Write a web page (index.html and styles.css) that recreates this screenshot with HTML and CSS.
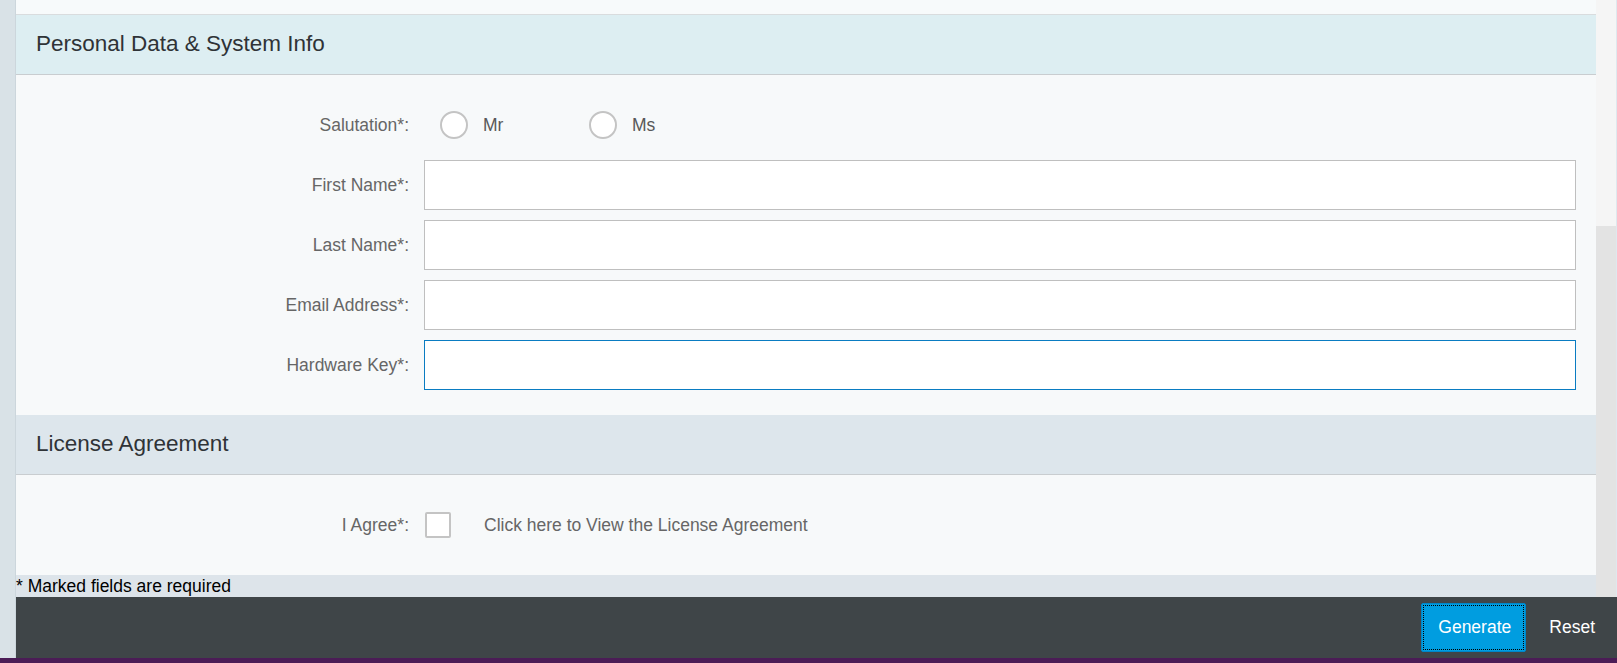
FILE: index.html
```html
<!DOCTYPE html>
<html lang="en">
<head>
<meta charset="utf-8">
<title>License Key Request</title>
<link rel="stylesheet" href="styles.css">
</head>
<body>
<div class="page">
  <div class="upper">
    <div class="strip"></div>
    <div class="column">
      <div class="mainrow">
        <div class="content">
          <div class="topband"></div>

          <div class="section-head personal"><h2>Personal Data &amp; System Info</h2></div>
          <div class="form">
            <div class="row">
              <label class="lbl">Salutation*:</label>
              <div class="field radios">
                <div class="radio"><span class="circle"></span><span class="rtext">Mr</span></div>
                <div class="radio"><span class="circle"></span><span class="rtext">Ms</span></div>
              </div>
            </div>
            <div class="row">
              <label class="lbl">First Name*:</label>
              <div class="field"><input class="inp" type="text"></div>
            </div>
            <div class="row">
              <label class="lbl">Last Name*:</label>
              <div class="field"><input class="inp" type="text"></div>
            </div>
            <div class="row">
              <label class="lbl">Email Address*:</label>
              <div class="field"><input class="inp" type="text"></div>
            </div>
            <div class="row">
              <label class="lbl">Hardware Key*:</label>
              <div class="field"><input class="inp focused" type="text"></div>
            </div>
          </div>

          <div class="section-head license"><h2>License Agreement</h2></div>
          <div class="form">
            <div class="row">
              <label class="lbl">I Agree*:</label>
              <div class="field agree">
                <span class="checkbox"></span>
                <span class="link">Click here to View the License Agreement</span>
              </div>
            </div>
          </div>

          <div class="note">* Marked fields are required</div>
        </div>
        <div class="scrollbar"><div class="track"></div><div class="thumb"></div></div>
      </div>
      <div class="footer">
        <button class="btn primary">Generate</button>
        <button class="btn plain">Reset</button>
      </div>
    </div>
  </div>
  <div class="taskbar"></div>
</div>
</body>
</html>
```

FILE: styles.css
```css
* { box-sizing: border-box; }

html, body {
  margin: 0;
  padding: 0;
  height: 663px;
  overflow: hidden;
  font-family: "Liberation Sans", Arial, sans-serif;
}

.page {
  display: flex;
  flex-direction: column;
  height: 663px;
}

.upper {
  display: flex;
  height: 658px;
}

.strip {
  width: 16px;
  background: #d9e2e7;
  border-right: 1px solid #ccd6dc;
}

.column {
  flex: 1;
  display: flex;
  flex-direction: column;
}

.mainrow {
  display: flex;
  height: 597px;
}

.content {
  width: 1580px;
  display: flex;
  flex-direction: column;
  background: #f7f9fa;
}

.topband {
  height: 15px;
  background: #f7fafb;
  border-bottom: 1px solid #d9dcde;
}

.section-head {
  height: 60px;
  display: flex;
  align-items: center;
  padding-left: 20px;
  border-bottom: 1px solid #c9cdd0;
}

.section-head h2 {
  margin: 0;
  font-weight: normal;
  font-size: 22.5px;
  color: #2f3337;
  position: relative;
  top: -1px;
}

.personal { background: #ddeef2; }
.license { background: #dde6ec; }

.form {
  padding: 25px 20px 25px 0;
  display: flex;
  flex-direction: column;
  gap: 10px;
  background: #f7f9fa;
}

.row {
  display: flex;
  align-items: center;
  height: 50px;
  gap: 15px;
}

.lbl {
  width: 393px;
  text-align: right;
  font-size: 17.5px;
  color: #666666;
}

.field {
  flex: 1;
  height: 50px;
  display: flex;
  align-items: center;
}

.inp {
  width: 100%;
  height: 50px;
  border: 1px solid #bfbfbf;
  background: #ffffff;
  margin: 0;
  outline: none;
  font-family: inherit;
  font-size: 17.5px;
}

.inp.focused { border-color: #0a7cc2; }

.radio {
  width: 149px;
  display: flex;
  align-items: center;
  padding-left: 16px;
  gap: 15px;
}

.circle {
  width: 28px;
  height: 28px;
  border: 2px solid #c4c4c4;
  border-radius: 50%;
  background: #ffffff;
}

.rtext {
  font-size: 17.5px;
  color: #585858;
}

.agree { gap: 33px; }

.checkbox {
  width: 26px;
  height: 26px;
  margin-left: 1px;
  border: 2px solid #c4c4c4;
  border-radius: 2px;
  background: #ffffff;
}

.link {
  font-size: 17.5px;
  color: #666666;
}

.note {
  flex: 1;
  background: #dde4ea;
  font-size: 17.5px;
  color: #000000;
  line-height: 22px;
}

.scrollbar {
  width: 21px;
  display: flex;
  flex-direction: column;
  border-right: 1px solid #dfe8ee;
}

.track {
  height: 226px;
  background: #f5f5f5;
}

.thumb {
  flex: 1;
  background: #e3e3e3;
}

.footer {
  height: 61px;
  background: #3f4548;
  display: flex;
  justify-content: flex-end;
  align-items: flex-start;
  padding: 6px 5px 0 0;
  gap: 6px;
}

.btn {
  height: 49px;
  font-family: inherit;
  font-size: 17.5px;
  color: #ffffff;
  border: 1px solid transparent;
  border-radius: 2px;
  cursor: pointer;
  padding: 0 16px;
}

.btn.primary {
  width: 105px;
  background: #009de0;
  border-color: #0086c9;
  outline: 1px dotted #000000;
  outline-offset: -3px;
}

.btn.plain {
  background: transparent;
}

.taskbar {
  height: 5px;
  background: #4b1c56;
}
```
